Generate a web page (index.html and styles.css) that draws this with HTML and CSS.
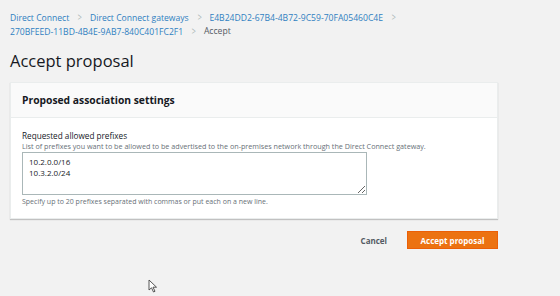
FILE: index.html
```html
<!DOCTYPE html>
<html lang="en">
<head>
    <meta charset="UTF-8">
    <title>Accept proposal</title>
    <link rel="stylesheet" href="styles.css">
</head>
<body>
    <div class="page">
        <!-- Breadcrumbs -->
        <div class="breadcrumbs">
            <span class="crumb"><a href="#">Direct Connect</a><span class="sep">&gt;</span></span>
            <span class="crumb"><a href="#">Direct Connect gateways</a><span class="sep">&gt;</span></span>
            <span class="crumb"><a href="#">E4B24DD2-67B4-4B72-9C59-70FA05460C4E</a><span class="sep">&gt;</span></span>
            <span class="crumb"><a href="#">270BFEED-11BD-4B4E-9AB7-840C401FC2F1</a><span class="sep">&gt;</span></span>
            <span class="crumb current">Accept</span>
        </div>

        <h1>Accept proposal</h1>

        <div class="card">
            <div class="card-header">Proposed association settings</div>
            <div class="card-body">
                <label class="field-label" for="prefixes">Requested allowed prefixes</label>
                <div class="field-desc">List of prefixes you want to be allowed to be advertised to the on-premises network through the Direct Connect gateway.</div>
                <textarea id="prefixes" class="field-input">10.2.0.0/16
10.3.2.0/24</textarea>
                <div class="field-hint">Specify up to 20 prefixes separated with commas or put each on a new line.</div>
            </div>
        </div>

        <div class="actions">
            <button type="button" class="btn-link">Cancel</button>
            <button type="button" class="btn-primary">Accept proposal</button>
        </div>
    </div>

    <!-- mouse pointer -->
    <svg class="cursor" width="10" height="14" viewBox="0 0 10 14">
        <path d="M1 1 L1 11 L3.5 8.8 L5.5 13 L7 12.3 L5 8.2 L8.5 8.2 Z" fill="#fff" stroke="#444" stroke-width="0.9"/>
    </svg>
</body>
</html>
```

FILE: styles.css
```css
body {
    margin: 0;
    background-color: #f2f2f2;
    font-family: "Open Sans", Arial, sans-serif;
    color: #16191f;
}

.page {
    width: 488px;
    padding: 11px 10px 8px;
}

.breadcrumbs {
    display: flex;
    flex-wrap: wrap;
    width: 540px;
    font-size: 8.6px;
    line-height: 13px;
}

.crumb a {
    color: #2f7fc1;
    text-decoration: none;
}

.crumb .sep {
    display: inline-block;
    margin: 0 7px 0 8px;
    color: #aab7b8;
    transform: scaleX(0.7);
    font-size: 10px;
}

.crumb.current {
    color: #545b64;
}

h1 {
    margin: 11px 0 0;
    font-size: 16.5px;
    font-weight: 400;
    line-height: 22px;
}

.card {
    margin-top: 10px;
    background-color: #fff;
    border: 1px solid #eaeded;
    box-shadow: 0 1px 1px rgba(0,0,0,0.2);
}

.card-header {
    padding: 10px 11px;
    background-color: #fafafa;
    border-bottom: 1px solid #eaeded;
    font-size: 10.3px;
    font-weight: 700;
    line-height: 14px;
}

.card-body {
    padding: 12px 11px 11px;
}

.field-label {
    display: block;
    font-size: 8.2px;
    line-height: 11px;
    color: #16191f;
}

.field-desc {
    font-size: 7.2px;
    line-height: 10px;
    color: #687078;
}

.field-input {
    display: block;
    width: 345px;
    height: 43px;
    margin-top: 1px;
    padding: 3px 6px;
    box-sizing: border-box;
    border: 1px solid #aab7b8;
    border-radius: 0;
    font-family: "Open Sans", Arial, sans-serif;
    font-size: 8px;
    line-height: 11px;
    color: #16191f;
    resize: vertical;
}

.field-hint {
    margin-top: 2px;
    font-size: 7px;
    line-height: 10px;
    color: #687078;
}

.actions {
    display: flex;
    justify-content: flex-end;
    align-items: center;
    gap: 20px;
    margin-top: 12px;
}

.btn-link {
    background: none;
    border: none;
    padding: 0;
    font-family: "Open Sans", Arial, sans-serif;
    font-size: 8px;
    font-weight: 700;
    color: #545b64;
}

.btn-primary {
    width: 91px;
    height: 18px;
    background-color: #ec7211;
    border: 1px solid #eb5f07;
    color: #fff;
    font-family: "Open Sans", Arial, sans-serif;
    font-size: 8px;
    font-weight: 700;
    padding: 0;
}

.cursor {
    position: absolute;
    left: 148px;
    top: 279px;
}
```
